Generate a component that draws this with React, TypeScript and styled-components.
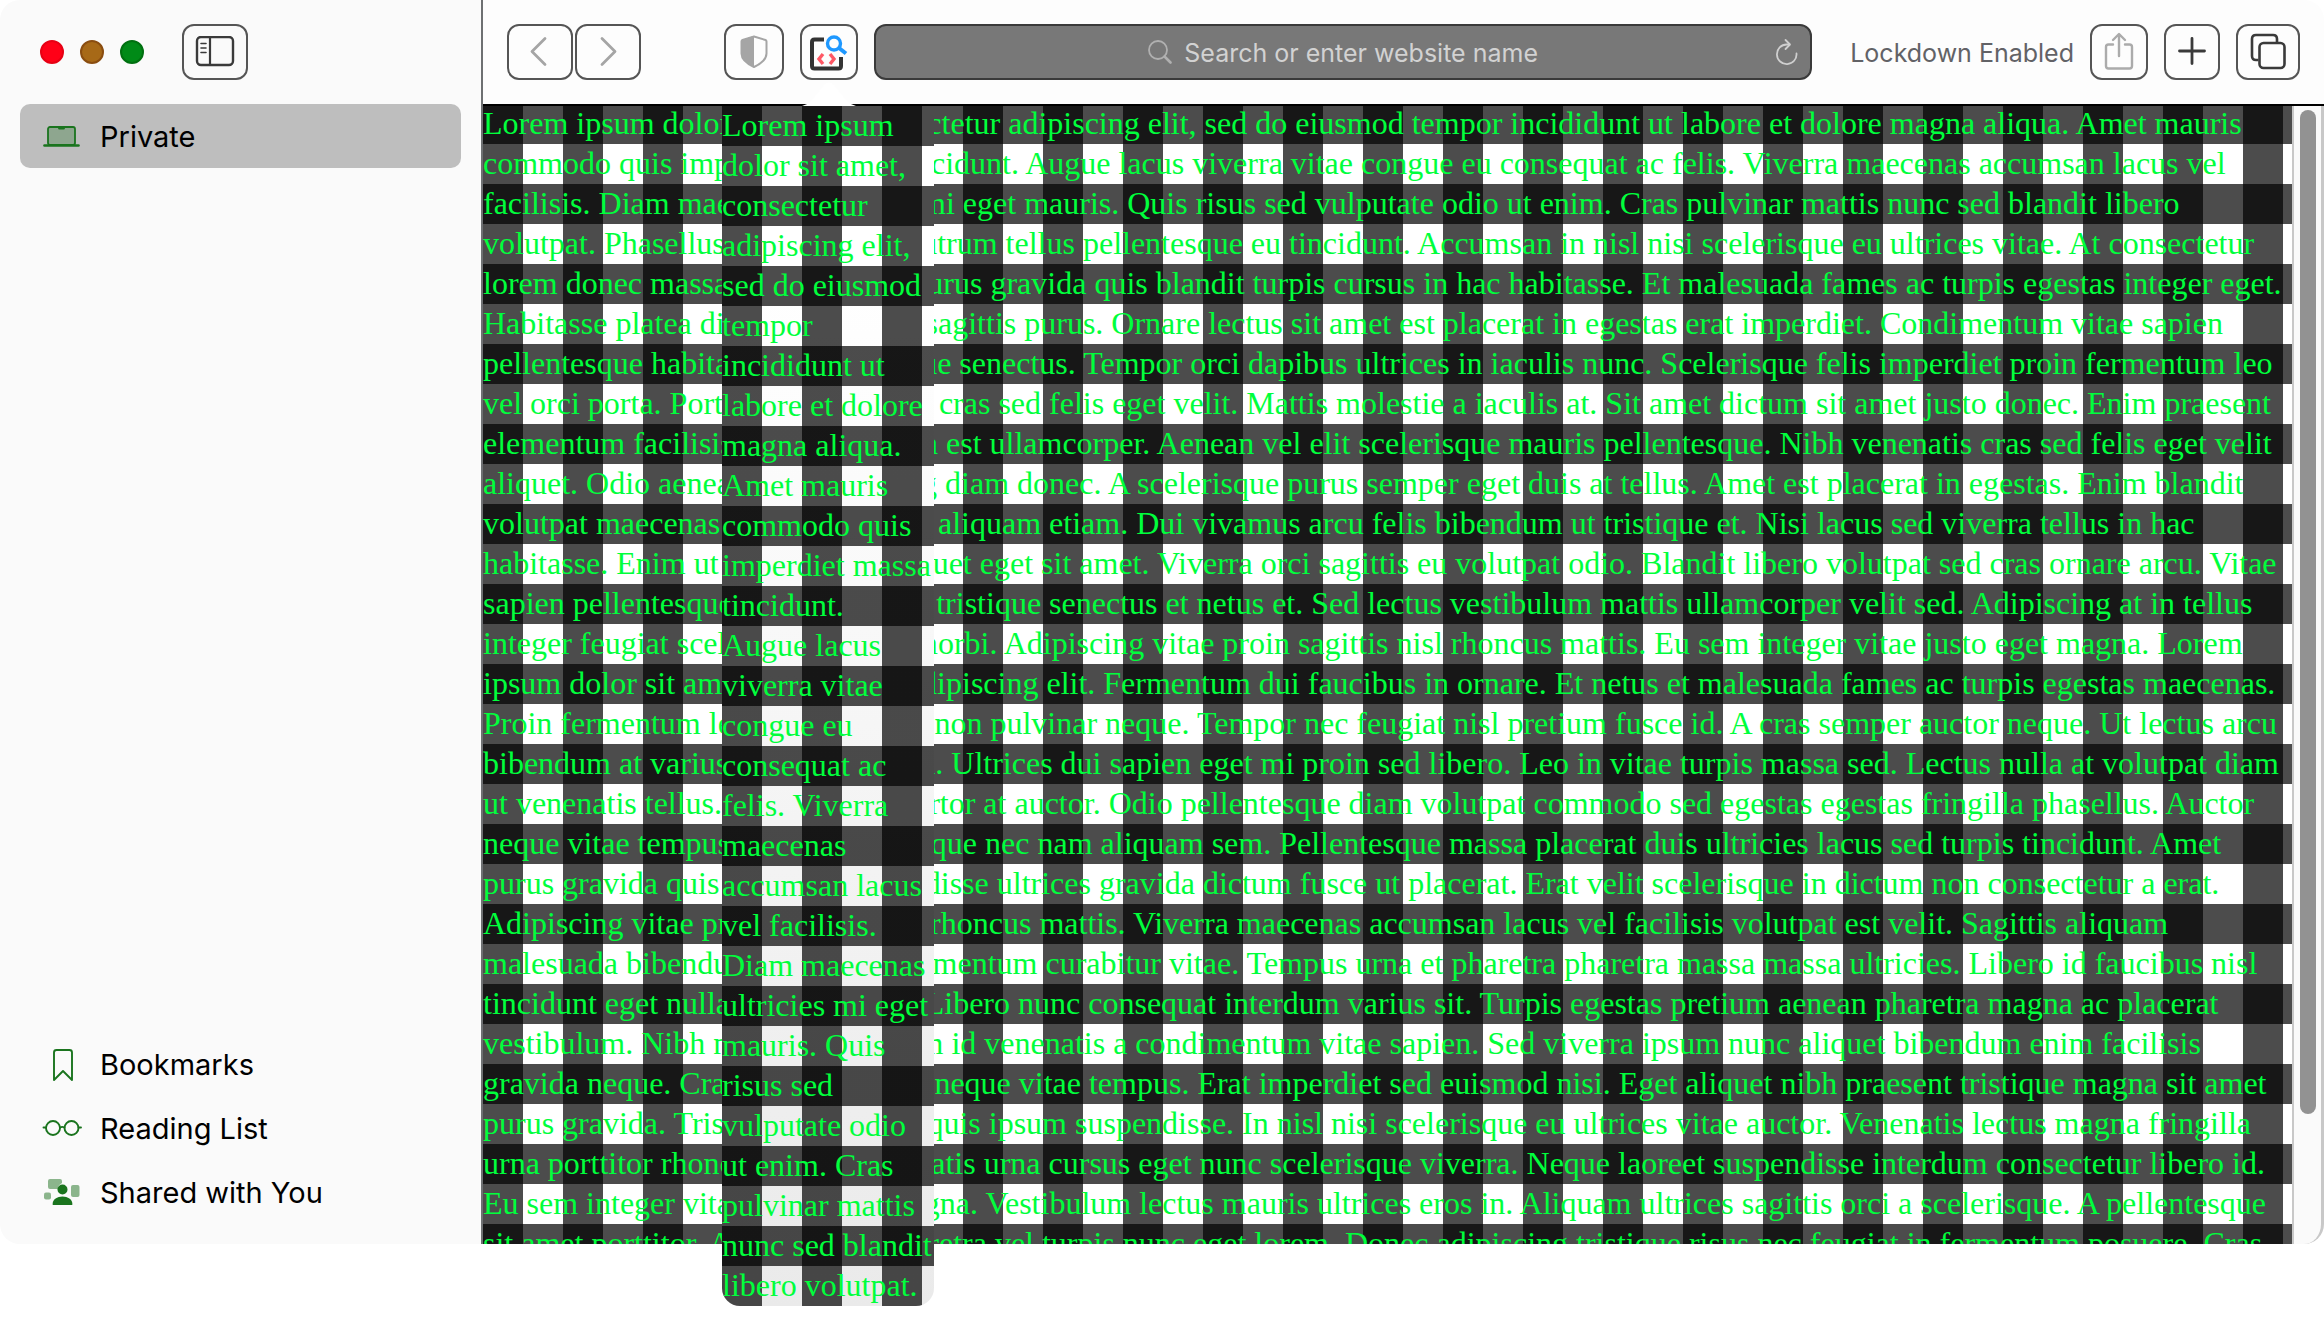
import React from "react";
import styled, { createGlobalStyle } from "styled-components";

const GlobalStyle = createGlobalStyle`
  *, *::before, *::after { box-sizing: border-box; }
  body { margin: 0; background: #ffffff; }
`;

const uiFont = `Inter, "Liberation Sans", sans-serif`;

const Desktop = styled.div`
  min-height: 100vh;
  padding-bottom: 88px;
  background: #ffffff;
`;

const Window = styled.div`
  display: flex;
  height: calc(100vh - 88px);
  min-height: 480px;
  font-family: ${uiFont};
`;

const Sidebar = styled.aside`
  flex: 0 0 483px;
  display: flex;
  flex-direction: column;
  justify-content: space-between;
  padding: 0 20px 20px;
  border-right: 2px solid #6e7072;
  border-radius: 20px 0 0 20px;
  background: #fafafa;
`;

const SidebarHeader = styled.div`
  display: flex;
  align-items: center;
  height: 104px;
  padding: 0 20px;
`;

const TrafficLights = styled.div`
  display: flex;
  gap: 16px;
  margin-right: 38px;
`;

const TrafficLight = styled.button<{ $fill: string; $rim: string }>`
  width: 24px;
  height: 24px;
  padding: 0;
  border: 2px solid ${(p) => p.$rim};
  border-radius: 50%;
  background: ${(p) => p.$fill};
`;

const SidebarList = styled.nav`
  display: flex;
  flex-direction: column;
`;

const SidebarItem = styled.a<{ $selected?: boolean }>`
  display: flex;
  align-items: center;
  gap: 17px;
  height: 64px;
  padding: 2px 20px 0;
  border-radius: 10px;
  background: ${(p) => (p.$selected ? "#bebebe" : "transparent")};
  color: #000000;
  font-size: 29px;
  line-height: 36px;
  text-decoration: none;
  white-space: nowrap;
`;

const Main = styled.main`
  flex: 1;
  min-width: 0;
  display: flex;
  flex-direction: column;
`;

const Toolbar = styled.header`
  display: flex;
  align-items: center;
  gap: 16px;
  flex: 0 0 106px;
  padding: 0 24px;
  border-bottom: 2px solid #000000;
  border-top-right-radius: 20px;
  background: #fdfdfd;
`;

const NavGroup = styled.div`
  display: flex;
  gap: 2px;
  margin-right: 67px;
`;

const ToolButton = styled.button<{ $width: number }>`
  display: flex;
  flex: none;
  align-items: center;
  justify-content: center;
  width: ${(p) => p.$width}px;
  height: 56px;
  padding: 0;
  border: 2px solid #555555;
  border-radius: 12px;
  background: transparent;
  color: #3a3a3a;
`;

const AddressBar = styled.div`
  display: flex;
  flex: 1;
  align-items: center;
  min-width: 0;
  height: 56px;
  padding: 0 10px 0 36px;
  border: 2px solid #3a3a3a;
  border-radius: 12px;
  background: #787878;
`;

const SearchLabel = styled.label`
  display: flex;
  flex: 1;
  align-items: center;
  justify-content: center;
  gap: 12px;
  min-width: 0;
`;

const SearchInput = styled.input`
  field-sizing: content;
  min-width: 0;
  padding: 2px 0 0;
  border: 0;
  outline: 0;
  background: transparent;
  color: #ffffff;
  font-family: ${uiFont};
  font-size: 25px;
  line-height: 32px;
  &::placeholder { color: #d2d2d2; opacity: 1; }
`;

const ReloadButton = styled.button`
  display: flex;
  padding: 0;
  border: 0;
  background: transparent;
`;

const Status = styled.span`
  margin-left: 22px;
  padding-top: 2px;
  color: #626266;
  font-size: 25px;
  line-height: 32px;
  white-space: nowrap;
`;

const gingham = `
  repeating-linear-gradient(90deg, rgba(0, 0, 0, 0.7) 0 40px, transparent 40px 80px),
  repeating-linear-gradient(180deg, rgba(0, 0, 0, 0.7) 0 40px, transparent 40px 80px)
`;

const pageType = `
  color: #00ff3c;
  font-family: "Liberation Serif", serif;
  font-size: 32px;
  line-height: 40px;
  white-space: nowrap;
`;

const Viewport = styled.div`
  display: flex;
  flex: 1;
  min-height: 0;
`;

const Page = styled.article`
  flex: 1;
  min-width: 0;
  min-height: 0;
  overflow: hidden;
  background: ${gingham};
  background-position: 0 -2px;
  ${pageType}
`;

const PageText = styled.p`
  margin: -3px 0 0;
`;

const Line = styled.span`
  display: block;
`;

const ScrollTrack = styled.div`
  flex: 0 0 32px;
  padding: 4px 5px 0 6px;
  border-left: 2px solid #c8c8c8;
  border-right: 3px solid #c8c8c8;
  border-bottom-right-radius: 20px;
  background: #fafafa;
`;

const ScrollThumb = styled.div`
  height: 88.5%;
  border-radius: 8px;
  background: #929292;
`;

const PopoverAnchor = styled.div`
  position: relative;
  flex: none;
`;

const PopoverArrow = styled.svg`
  position: absolute;
  top: 58px;
  left: 2px;
`;

const Popover = styled.div`
  position: absolute;
  z-index: 1;
  top: 82px;
  left: -78px;
  width: 212px;
  overflow: hidden;
  border-radius: 0 0 18px 18px;
  background: ${gingham}, linear-gradient(180deg, #ffffff, #ffffff 15%, #eaeaea);
  ${pageType}
`;

const PopoverText = styled.p`
  margin: -1px 0 1px;
`;

const pageLines = [
  "Lorem ipsum dolor sit amet, consectetur adipiscing elit, sed do eiusmod tempor incididunt ut labore et dolore magna aliqua. Amet mauris",
  "commodo quis imperdiet massa tincidunt. Augue lacus viverra vitae congue eu consequat ac felis. Viverra maecenas accumsan lacus vel",
  "facilisis. Diam maecenas ultricies mi eget mauris. Quis risus sed vulputate odio ut enim. Cras pulvinar mattis nunc sed blandit libero",
  "volutpat. Phasellus egestas tellus rutrum tellus pellentesque eu tincidunt. Accumsan in nisl nisi scelerisque eu ultrices vitae. At consectetur",
  "lorem donec massa sapien. Amet purus gravida quis blandit turpis cursus in hac habitasse. Et malesuada fames ac turpis egestas integer eget.",
  "Habitasse platea dictumst quisque sagittis purus. Ornare lectus sit amet est placerat in egestas erat imperdiet. Condimentum vitae sapien",
  "pellentesque habitant morbi tristique senectus. Tempor orci dapibus ultrices in iaculis nunc. Scelerisque felis imperdiet proin fermentum leo",
  "vel orci porta. Porta nibh venenatis cras sed felis eget velit. Mattis molestie a iaculis at. Sit amet dictum sit amet justo donec. Enim praesent",
  "elementum facilisis leo vel fringilla est ullamcorper. Aenean vel elit scelerisque mauris pellentesque. Nibh venenatis cras sed felis eget velit",
  "aliquet. Odio aenean sed adipiscing diam donec. A scelerisque purus semper eget duis at tellus. Amet est placerat in egestas. Enim blandit",
  "volutpat maecenas volutpat blandit aliquam etiam. Dui vivamus arcu felis bibendum ut tristique et. Nisi lacus sed viverra tellus in hac",
  "habitasse. Enim ut sem viverra aliquet eget sit amet. Viverra orci sagittis eu volutpat odio. Blandit libero volutpat sed cras ornare arcu. Vitae",
  "sapien pellentesque habitant morbi tristique senectus et netus et. Sed lectus vestibulum mattis ullamcorper velit sed. Adipiscing at in tellus",
  "integer feugiat scelerisque varius morbi. Adipiscing vitae proin sagittis nisl rhoncus mattis. Eu sem integer vitae justo eget magna. Lorem",
  "ipsum dolor sit amet consectetur adipiscing elit. Fermentum dui faucibus in ornare. Et netus et malesuada fames ac turpis egestas maecenas.",
  "Proin fermentum leo vel orci porta non pulvinar neque. Tempor nec feugiat nisl pretium fusce id. A cras semper auctor neque. Ut lectus arcu",
  "bibendum at varius vel pharetra vel. Ultrices dui sapien eget mi proin sed libero. Leo in vitae turpis massa sed. Lectus nulla at volutpat diam",
  "ut venenatis tellus. Aliquet enim tortor at auctor. Odio pellentesque diam volutpat commodo sed egestas egestas fringilla phasellus. Auctor",
  "neque vitae tempus quam pellentesque nec nam aliquam sem. Pellentesque massa placerat duis ultricies lacus sed turpis tincidunt. Amet",
  "purus gravida quis blandit. Suspendisse ultrices gravida dictum fusce ut placerat. Erat velit scelerisque in dictum non consectetur a erat.",
  "Adipiscing vitae proin sagittis nisl rhoncus mattis. Viverra maecenas accumsan lacus vel facilisis volutpat est velit. Sagittis aliquam",
  "malesuada bibendum arcu vitae elementum curabitur vitae. Tempus urna et pharetra pharetra massa massa ultricies. Libero id faucibus nisl",
  "tincidunt eget nullam non nisi est. Libero nunc consequat interdum varius sit. Turpis egestas pretium aenean pharetra magna ac placerat",
  "vestibulum. Nibh nisl condimentum id venenatis a condimentum vitae sapien. Sed viverra ipsum nunc aliquet bibendum enim facilisis",
  "gravida neque. Cras semper auctor neque vitae tempus. Erat imperdiet sed euismod nisi. Eget aliquet nibh praesent tristique magna sit amet",
  "purus gravida. Tristique et egestas quis ipsum suspendisse. In nisl nisi scelerisque eu ultrices vitae auctor. Venenatis lectus magna fringilla",
  "urna porttitor rhoncus dolor. Venenatis urna cursus eget nunc scelerisque viverra. Neque laoreet suspendisse interdum consectetur libero id.",
  "Eu sem integer vitae justo eget magna. Vestibulum lectus mauris ultrices eros in. Aliquam ultrices sagittis orci a scelerisque. A pellentesque",
  "sit amet porttitor. At varius vel pharetra vel turpis nunc eget lorem. Donec adipiscing tristique risus nec feugiat in fermentum posuere. Cras",
];

const popoverLines = [
  "Lorem ipsum", "dolor sit amet,", "consectetur", "adipiscing elit,", "sed do eiusmod", "tempor",
  "incididunt ut", "labore et dolore", "magna aliqua.", "Amet mauris", "commodo quis", "imperdiet massa",
  "tincidunt.", "Augue lacus", "viverra vitae", "congue eu", "consequat ac", "felis. Viverra",
  "maecenas", "accumsan lacus", "vel facilisis.", "Diam maecenas", "ultricies mi eget", "mauris. Quis",
  "risus sed", "vulputate odio", "ut enim. Cras", "pulvinar mattis", "nunc sed blandit", "libero volutpat.",
];

const green = "#1a741e";

const SidebarIcon = () => (
  <svg width="40" height="32" viewBox="0 1 40 32" fill="none" stroke="#3a3a3a">
    <rect x="2" y="2" width="36" height="28" rx="4" strokeWidth="2.4" />
    <path d="M15 2v28" strokeWidth="2.2" />
    <path d="M6 8.500h5M6 13h5M6 17.500h5" strokeWidth="1.600" strokeLinecap="round" />
  </svg>
);

const LaptopIcon = () => (
  <svg width="43" height="36" viewBox="0 0 43 36" fill="none">
    <rect x="8" y="8" width="27" height="18" rx="2" fill="#8ea68f" stroke={green} strokeWidth="1.800" />
    <path d="M18 8h7v1q0 1.500-1.500 1.500h-4q-1.500 0-1.500-1.500z" fill={green} />
    <path d="M4.500 26.500h34" stroke={green} strokeWidth="2.600" strokeLinecap="round" />
  </svg>
);

const BookmarkIcon = () => (
  <svg width="43" height="36" viewBox="0 0 43 36" fill="none">
    <path d="M14 33V5.500q0-2.500 2.500-2.500h13q2.500 0 2.500 2.500V33l-9-9z" stroke={green} strokeWidth="1.900" strokeLinejoin="round" />
  </svg>
);

const GlassesIcon = () => (
  <svg width="43" height="36" viewBox="0 0 43 36" fill="none" stroke={green} strokeWidth="1.900">
    <circle cx="13" cy="17" r="7" />
    <circle cx="31.500" cy="17" r="7" />
    <path d="M20 16.500q2.200-1.200 4.500 0M3.500 16.500H6M38.500 16.500H41" strokeLinecap="round" />
  </svg>
);

const SharedIcon = () => (
  <svg width="43" height="36" viewBox="0 0 43 36">
    <path d="M10 4h10q2 0 2 2v2q-4 2-4 6H10q-2 0-2-2V6q0-2 2-2z" fill="#8bb58c" />
    <rect x="31" y="10" width="8.500" height="12" rx="2" fill="#8bb58c" />
    <rect x="4" y="17.500" width="7" height="7" rx="2" fill="#8bb58c" />
    <circle cx="22.500" cy="14.500" r="5" fill={green} />
    <path d="M12.700 30v-1.500c0-4 4.500-7 9.800-7s9.800 3 9.800 7V30z" fill={green} />
  </svg>
);

const BackIcon = () => (
  <svg width="20" height="32" viewBox="0 0 20 32" fill="none" stroke="#a5a5a5" strokeWidth="2.800" strokeLinecap="round" strokeLinejoin="round">
    <path d="M15 2.500 2 15.500l13 13" />
  </svg>
);

const ForwardIcon = () => (
  <svg width="20" height="32" viewBox="0 0 20 32" fill="none" stroke="#a5a5a5" strokeWidth="2.800" strokeLinecap="round" strokeLinejoin="round">
    <path d="m4 2.500 13 13-13 13" />
  </svg>
);

const ShieldIcon = () => (
  <svg width="30" height="36" viewBox="0 0 30 36" fill="none">
    <path d="M15 2.500 26.500 6q1 .5 1 1.500v12c0 6-5 10-12.500 13.500C7.500 29.500 2.500 25.500 2.500 19.500v-12q0-1 1-1.500z" stroke="#a5a5a5" strokeWidth="2" strokeLinejoin="round" />
    <path d="M15 2 3.500 6q-1 .5-1 1.500v12c0 6 5 10 12.500 13.500z" fill="#a5a5a5" />
  </svg>
);

const InspectorIcon = () => (
  <svg width="38" height="38" viewBox="3 -2 38 38" fill="none">
    <path d="M17 4.500H7.500q-2.500 0-2.500 2.500v24q0 2.500 2.500 2.500h24q2.500 0 2.500-2.500V22" stroke="#333333" strokeWidth="4" />
    <path d="m16 19-4 5 4 5M23 19l4 5-4 5" stroke="#ff5865" strokeWidth="3.400" />
    <circle cx="27" cy="8.500" r="6.500" stroke="#1e98ff" strokeWidth="3.400" />
    <path d="m32 13 7 5.500" stroke="#1e98ff" strokeWidth="4" />
  </svg>
);

const SearchIcon = () => (
  <svg width="24" height="26" viewBox="0 0 24 26" fill="none" stroke="#b0b0b0" strokeLinecap="round">
    <circle cx="10" cy="11" r="9" strokeWidth="1.800" />
    <path d="m16.500 17.500 6 6" strokeWidth="2.600" />
  </svg>
);

const ReloadIcon = () => (
  <svg width="26" height="28" viewBox="0 0 26 28" fill="none" stroke="#cfcfcf" strokeWidth="1.800" strokeLinecap="round" strokeLinejoin="round">
    <path d="M22.500 15.500A9.800 9.800 0 1 1 12.700 6.500h2" />
    <path d="m11.500 2 4.500 4.500-4.500 4.500" />
  </svg>
);

const ShareIcon = () => (
  <svg width="32" height="40" viewBox="0 0 32 40" fill="none" stroke="#ababab" strokeWidth="2.400" strokeLinecap="round" strokeLinejoin="round">
    <path d="M10 12.500H5.500Q3 12.500 3 15v19q0 2.500 2.500 2.500h21q2.500 0 2.500-2.500V15q0-2.500-2.500-2.500H22M16 24V2.500M10 8 16 2l6 6" />
  </svg>
);

const PlusIcon = () => (
  <svg width="30" height="30" viewBox="0 1 30 30" stroke="#3a3a3a" strokeWidth="2.800" strokeLinecap="round">
    <path d="M15 2.500v25M2.500 15h25" />
  </svg>
);

const TabsIcon = () => (
  <svg width="38" height="38" viewBox="0 1 38 38" fill="none" stroke="#3a3a3a" strokeWidth="2.600" strokeLinejoin="round">
    <rect x="10.500" y="11" width="25" height="25" rx="4" />
    <path d="M9.500 28H7q-4 0-4-4V7q0-4 4-4h17q4 0 4 4v3" />
  </svg>
);

export default function App() {
  return (
    <Desktop>
      <GlobalStyle />
      <Window>
        <Sidebar>
          <div>
            <SidebarHeader>
              <TrafficLights>
                <TrafficLight $fill="#ff0017" $rim="#e60014" aria-label="Close" />
                <TrafficLight $fill="#a76917" $rim="#8a4d10" aria-label="Minimize" />
                <TrafficLight $fill="#008a17" $rim="#007010" aria-label="Zoom" />
              </TrafficLights>
              <ToolButton $width={66} aria-label="Toggle sidebar"><SidebarIcon /></ToolButton>
            </SidebarHeader>
            <SidebarList>
              <SidebarItem href="#private" $selected><LaptopIcon />Private</SidebarItem>
            </SidebarList>
          </div>
          <SidebarList>
            <SidebarItem href="#bookmarks"><BookmarkIcon />Bookmarks</SidebarItem>
            <SidebarItem href="#reading-list"><GlassesIcon />Reading List</SidebarItem>
            <SidebarItem href="#shared"><SharedIcon />Shared with You</SidebarItem>
          </SidebarList>
        </Sidebar>
        <Main>
          <Toolbar>
            <NavGroup>
              <ToolButton $width={66} aria-label="Back"><BackIcon /></ToolButton>
              <ToolButton $width={66} aria-label="Forward"><ForwardIcon /></ToolButton>
            </NavGroup>
            <ToolButton $width={60} aria-label="Privacy report"><ShieldIcon /></ToolButton>
            <PopoverAnchor>
              <ToolButton $width={58} aria-label="Extension"><InspectorIcon /></ToolButton>
              <PopoverArrow width="54" height="24" viewBox="0 0 54 24">
                <path d="M0 24q5-1 9-5L22 3q5-5 10 0l13 16q4 4 9 5z" fill="#ffffff" />
              </PopoverArrow>
              <Popover>
                <PopoverText>
                  {popoverLines.map((line) => <Line key={line}>{line}</Line>)}
                </PopoverText>
              </Popover>
            </PopoverAnchor>
            <AddressBar>
              <SearchLabel>
                <SearchIcon />
                <SearchInput type="text" placeholder="Search or enter website name" />
              </SearchLabel>
              <ReloadButton aria-label="Reload"><ReloadIcon /></ReloadButton>
            </AddressBar>
            <Status>Lockdown Enabled</Status>
            <ToolButton $width={58} aria-label="Share"><ShareIcon /></ToolButton>
            <ToolButton $width={56} aria-label="New tab"><PlusIcon /></ToolButton>
            <ToolButton $width={64} aria-label="Tab overview"><TabsIcon /></ToolButton>
          </Toolbar>
          <Viewport>
            <Page>
              <PageText>
                {pageLines.map((line) => <Line key={line}>{line}</Line>)}
              </PageText>
            </Page>
            <ScrollTrack><ScrollThumb /></ScrollTrack>
          </Viewport>
        </Main>
      </Window>
    </Desktop>
  );
}
